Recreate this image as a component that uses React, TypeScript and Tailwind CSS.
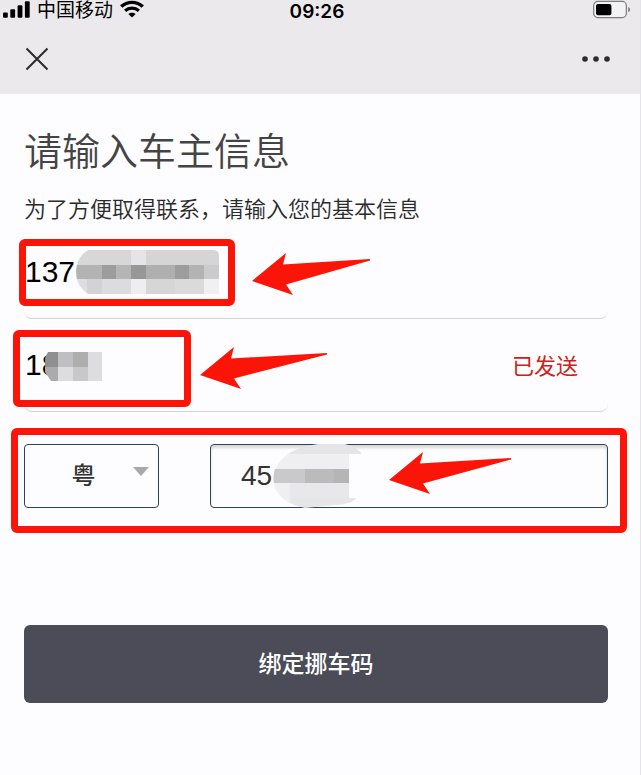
import { useState } from "react";
import type { ReactNode } from "react";

const PROVINCES = ["粤", "京", "沪", "浙", "苏", "川"];

function SignalIcon() {
  return (
    <svg width="28" height="18" viewBox="0 0 28 18" aria-hidden="true">
      <rect x="0" y="12.4" width="4.8" height="5.4" rx="1" />
      <rect x="7.3" y="9.2" width="4.8" height="8.6" rx="1" />
      <rect x="14.6" y="5.2" width="4.8" height="12.6" rx="1" />
      <rect x="21.9" y="1.2" width="4.8" height="16.6" rx="1" />
    </svg>
  );
}

function WifiIcon() {
  return (
    <svg width="24" height="18" viewBox="0 0 24 18" fill="none" stroke="#000" aria-hidden="true">
      <path d="M1.2 6.6C7.2.9 16.8.9 22.8 6.6" strokeWidth="3.4" />
      <path d="M5.1 10.8c3.9-3.6 9.9-3.6 13.8 0" strokeWidth="3.2" />
      <path d="M12 17.6 8.4 14c2-1.8 5.2-1.8 7.2 0z" fill="#000" stroke="none" />
    </svg>
  );
}

function BatteryIcon() {
  return (
    <svg width="38" height="19" viewBox="0 0 38 19" aria-hidden="true">
      <rect x="0.7" y="1.4" width="32.6" height="16.2" rx="4" fill="#f3f2f4" stroke="#7d7c7e" strokeWidth="1.2" />
      <rect x="3" y="3.9" width="15.4" height="11.4" rx="2" />
      <path d="M35.2 7c2.4.8 2.4 4.4 0 5.2z" fill="#7d7c7e" />
    </svg>
  );
}

function StatusBar() {
  return (
    <div className="grid h-6 grid-cols-3 items-start pl-[3px] pr-[9px] text-black">
      <div className="flex items-start whitespace-nowrap">
        <SignalIcon />
        <span className="ml-[6px] mr-[7px] text-[19px] leading-[22px]">中国移动</span>
        <WifiIcon />
      </div>
      <time className="text-center font-['Inter',sans-serif] text-[19px] font-semibold leading-6">
        09:26
      </time>
      <div className="flex justify-end">
        <BatteryIcon />
      </div>
    </div>
  );
}

function NavBar() {
  return (
    <div className="flex h-[70px] items-center justify-between pl-[25px] pr-[29px]">
      <button type="button" aria-label="关闭">
        <svg width="24" height="24" viewBox="0 0 24 24" fill="none" stroke="#2b2b2d" strokeWidth="2">
          <path d="M1.5 1.5l21 21M22.5 1.5l-21 21" />
        </svg>
      </button>
      <button type="button" aria-label="更多">
        <svg width="30" height="8" viewBox="0 0 30 8" fill="#2b2b2d">
          <circle cx="4" cy="4" r="2.8" />
          <circle cx="15" cy="4" r="2.8" />
          <circle cx="26" cy="4" r="2.8" />
        </svg>
      </button>
    </div>
  );
}

function Highlight({ className }: { className: string }) {
  return (
    <div
      className={`pointer-events-none absolute rounded-md border-[7px] border-[#fb1408] ${className}`}
    />
  );
}

function Arrow({ length, className }: { length: number; className: string }) {
  return (
    <svg
      width={length}
      height="42"
      viewBox={`0 0 ${length} 42`}
      fill="#fb1408"
      className={`pointer-events-none absolute ${className}`}
      aria-hidden="true"
    >
      <polygon points={`0,28 34,0 31,11.5 ${length},6 ${length},7.5 34,31.5 41,42`} />
    </svg>
  );
}

type Cell = [x: number, y: number, w: number, h: number, fill: string];

function Mosaic({
  id,
  width,
  height,
  outline,
  cells,
  className,
}: {
  id: string;
  width: number;
  height: number;
  outline: string;
  cells: Cell[];
  className: string;
}) {
  return (
    <svg
      width={width}
      height={height}
      viewBox={`0 0 ${width} ${height}`}
      shapeRendering="crispEdges"
      className={`pointer-events-none absolute ${className}`}
      aria-hidden="true"
    >
      <clipPath id={id}>
        <path d={outline} />
      </clipPath>
      <g clipPath={`url(#${id})`}>
        {cells.map(([x, y, w, h, fill]) => (
          <rect key={`${x}-${y}`} x={x} y={y} width={w} height={h} fill={fill} />
        ))}
      </g>
    </svg>
  );
}

const PHONE_CELLS: Cell[] = [
  [0, 0, 55, 15, "#d7d7d8"],
  [55, 0, 15, 15, "#e5e4e7"],
  [70, 0, 73, 15, "#d5d5d6"],
  [0, 15, 26, 14, "#b3b3b3"],
  [26, 15, 14, 14, "#9c9c9c"],
  [40, 15, 15, 14, "#b5b5b6"],
  [55, 15, 15, 14, "#979797"],
  [70, 15, 29, 14, "#afafaf"],
  [99, 15, 14, 14, "#9d9d9d"],
  [113, 15, 15, 14, "#b3b3b4"],
  [128, 15, 15, 14, "#cbcbcc"],
  [0, 29, 11, 15, "#dedee0"],
  [11, 29, 15, 15, "#d3d3d5"],
  [26, 29, 29, 15, "#dcdcde"],
  [55, 29, 15, 15, "#eeedf0"],
  [70, 29, 29, 15, "#d6d6d7"],
  [99, 29, 29, 15, "#dadadb"],
  [128, 29, 15, 15, "#f0eff2"],
];

const CODE_CELLS: Cell[] = [
  [0, 0, 13, 15, "#8f8f8f"],
  [13, 0, 15, 15, "#bfbec0"],
  [28, 0, 15, 15, "#aeaeaf"],
  [43, 0, 14, 15, "#dddcdf"],
  [0, 15, 13, 14, "#ababab"],
  [13, 15, 15, 14, "#dddcde"],
  [28, 15, 15, 14, "#c8c7c9"],
  [43, 15, 14, 14, "#dddcdf"],
];

const PLATE_CELLS: Cell[] = [
  [0, 0, 89, 10, "#e5e4e7"],
  [0, 10, 76, 15, "#efeef1"],
  [0, 25, 32, 14, "#c9c8ca"],
  [32, 25, 29, 14, "#bbbbbc"],
  [61, 25, 15, 14, "#b5b5b6"],
  [0, 39, 17, 25, "#efeef1"],
  [17, 39, 59, 15, "#e8e7ea"],
  [17, 54, 72, 10, "#e6e5e8"],
];

function Field({
  label,
  value,
  onChange,
  children,
}: {
  label: string;
  value: string;
  onChange: (value: string) => void;
  children?: ReactNode;
}) {
  return (
    <div className="relative flex h-[93px] items-center rounded-lg border-b border-[#d3d2d7]">
      <input
        type="text"
        inputMode="numeric"
        aria-label={label}
        value={value}
        onChange={(e) => onChange(e.target.value)}
        className="h-full min-w-0 flex-1 bg-transparent pl-px font-['Liberation_Sans',sans-serif] text-[30px] text-black outline-none"
      />
      {children}
    </div>
  );
}

export default function App() {
  const [phone, setPhone] = useState("137");
  const [code, setCode] = useState("18");
  const [province, setProvince] = useState("粤");
  const [plate, setPlate] = useState("45");

  return (
    <div className="min-h-screen border-r border-[#e4e3e7] bg-[#fdfcfe] font-['Liberation_Sans','Noto_Sans_CJK_SC',sans-serif]">
      <header className="bg-[#ebe9eb]">
        <StatusBar />
        <NavBar />
      </header>

      <main className="pb-16 pl-6 pr-8 pt-[34px]">
        <h1 className="text-[38px] font-[350] leading-[48px] text-[#444]">请输入车主信息</h1>
        <p className="mt-[18px] text-[22px] font-[350] leading-8 text-[#2a2a2a]">
          为了方便取得联系，请输入您的基本信息
        </p>

        <form onSubmit={(e) => e.preventDefault()}>
          <Field label="手机号" value={phone} onChange={setPhone}>
            <Mosaic
              id="phone-mask"
              width={143}
              height={44}
              outline="M12 0H137Q143 0 143 6V44H12Q0 36 0 22T12 0Z"
              cells={PHONE_CELLS}
              className="left-[52px] top-6"
            />
            <Highlight className="-left-[5px] top-[13px] h-[67px] w-[216px]" />
            <Arrow length={118} className="left-[228px] top-[27px]" />
          </Field>

          <Field label="验证码" value={code} onChange={setCode}>
            <span className="mr-[30px] pt-0.5 text-[22px] text-[#cf2018]">已发送</span>
            <Mosaic
              id="code-mask"
              width={57}
              height={29}
              outline="M3 0H57V29H6L0 20V6Z"
              cells={CODE_CELLS}
              className="left-[21px] top-[33px]"
            />
            <Highlight className="-left-[11px] top-[11px] h-[77px] w-[178px]" />
            <Arrow length={127} className="left-[176px] top-[28px]" />
          </Field>

          <div className="relative mt-8 flex h-16 gap-[51px]">
            <div className="relative w-[135px]">
              <select
                aria-label="省份"
                value={province}
                onChange={(e) => setProvince(e.target.value)}
                className="h-full w-full appearance-none rounded border border-[#2f4256] bg-transparent pr-4 text-center text-[24px] font-medium text-[#333] outline-none [text-align-last:center]"
              >
                {PROVINCES.map((name) => (
                  <option key={name}>{name}</option>
                ))}
              </select>
              <svg
                width="16"
                height="9"
                viewBox="0 0 16 9"
                fill="#a9a8ab"
                className="pointer-events-none absolute right-[10px] top-[23px]"
                aria-hidden="true"
              >
                <path d="M0 0h16L8 9z" />
              </svg>
            </div>
            <div className="relative min-w-0 flex-1">
              <input
                type="text"
                aria-label="车牌号"
                value={plate}
                onChange={(e) => setPlate(e.target.value)}
                className="h-full w-full rounded border border-[#2f4256] bg-transparent pl-[30px] font-['Liberation_Sans',sans-serif] text-[28px] text-[#333] shadow-[inset_0_3px_3px_#d8d7da] outline-none"
              />
              <Mosaic
                id="plate-mask"
                width={89}
                height={64}
                outline="M45 0H72Q84 3 89 10H76V54H83Q80 60 62 61L32 64Q10 60 2 44Q-2 30 4 22Q14 4 45 0Z"
                cells={PLATE_CELLS}
                className="left-[63px] top-0"
              />
              <Arrow length={122} className="left-[179px] top-2" />
            </div>
            <Highlight className="-bottom-[25px] -left-[13px] -right-[19px] -top-4" />
          </div>

          <button
            type="submit"
            className="mt-[117px] h-[78px] w-full rounded-md bg-[#4b4c58] text-[23px] font-medium text-white"
          >
            绑定挪车码
          </button>
        </form>
      </main>
    </div>
  );
}
